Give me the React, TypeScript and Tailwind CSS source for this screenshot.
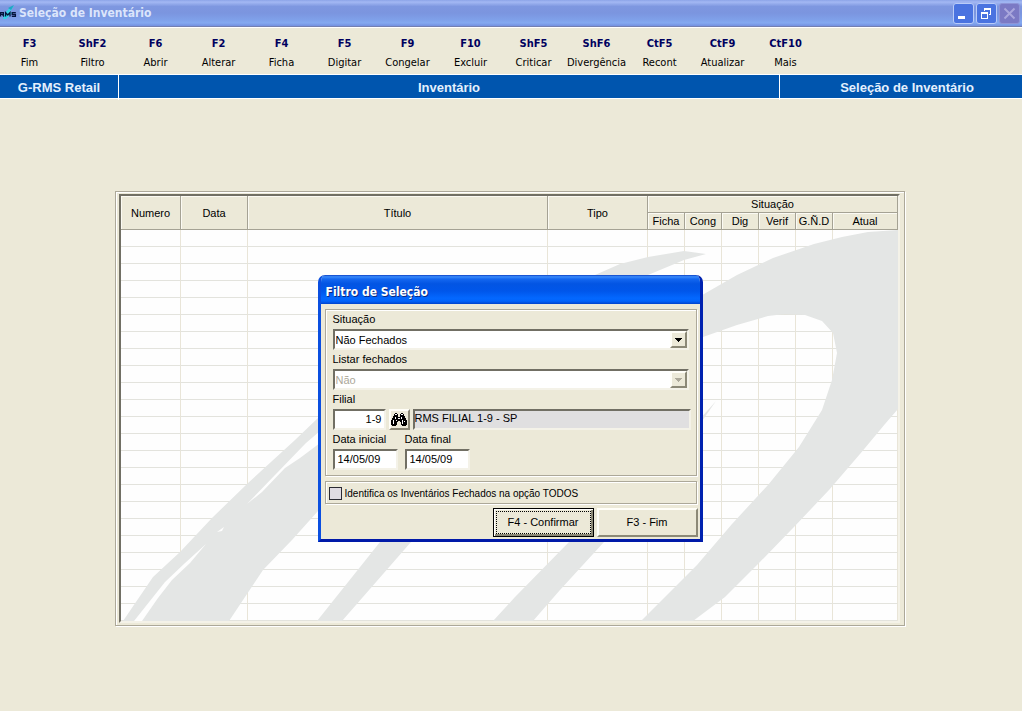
import React from "react";

const commands = [
  { key: "F3", label: "Fim" },
  { key: "ShF2", label: "Filtro" },
  { key: "F6", label: "Abrir" },
  { key: "F2", label: "Alterar" },
  { key: "F4", label: "Ficha" },
  { key: "F5", label: "Digitar" },
  { key: "F9", label: "Congelar" },
  { key: "F10", label: "Excluir" },
  { key: "ShF5", label: "Criticar" },
  { key: "ShF6", label: "Divergência" },
  { key: "CtF5", label: "Recont" },
  { key: "CtF9", label: "Atualizar" },
  { key: "CtF10", label: "Mais" },
];

const statusColumns = ["Ficha", "Cong", "Dig", "Verif", "G.Ñ.D", "Atual"];
const rows = Array.from({ length: 23 }, (_, i) => i);
const columns = Array.from({ length: 10 }, (_, i) => i);

const etched = "border border-[#aca899] shadow-[inset_1px_1px_0_#fff,1px_1px_0_#fff]";
const sunken =
  "border-2 border-t-[#716f64] border-l-[#716f64] border-r-[#f4f2e8] border-b-[#f4f2e8]";
const raised =
  "border-2 border-t-[#fffef8] border-l-[#fffef8] border-r-[#8c8977] border-b-[#8c8977] bg-[#ece9d8]";
const headCell =
  "border-r border-b border-[#a5a294] bg-[#ece9d8] p-0 text-center font-normal shadow-[inset_1px_1px_0_#fbfaf3]";

function Logo() {
  return (
    <svg viewBox="0 0 18 18" className="size-[18px] shrink-0" aria-hidden="true">
      <path d="M3 15 C4 9 8 4 14 2 L9 9 L13 8 L6 15 Z" fill="#35d3e6" />
      <path d="M8 4 L14 1 L11 6 Z" fill="#1fa7c4" />
      <g fill="none" stroke="#05143c" strokeWidth="1.3">
        <path d="M0.6 12.5 V8.6 H3.4 V10.4 H1 M2.4 10.4 L4 12.5" />
        <path d="M5.6 12.5 V8.6 L7.8 11 L10 8.6 V12.5" />
        <path d="M15.8 8.6 H12.2 V10.5 H15.4 V12.3 H11.8" />
      </g>
    </svg>
  );
}

function Binoculars() {
  return (
    <svg viewBox="0 0 16 13" className="h-[13px] w-4 shrink-0" shapeRendering="crispEdges" aria-hidden="true">
      <path d="M4 0h2v1h1v3h2v-3h1v-1h2v1h1v2h1v2h1v2h1v5h-1v1h-4v-1h-1v-3h-1v-1h-2v1h-1v3h-1v1h-4v-1h-1v-5h1v-2h1v-2h1v-2h1z" fill="#000" />
      <path
        d="M4 1h2v1h-2z M10 1h2v1h-2z M4 4h1v2h-1z M10 4h1v2h-1z M2 7h1v4h-1z M11 7h1v4h-1z M7 5h2v1h-2z M5 7h1v1h-1z M13 8h1v1h-1z"
        fill="#fff"
      />
    </svg>
  );
}

function Watermark() {
  return (
    <svg
      viewBox="121 230 777 391"
      preserveAspectRatio="none"
      className="pointer-events-none absolute inset-x-0 bottom-0 h-[391px] w-full"
      aria-hidden="true"
    >
      <g fill="#e4e6e5">
        <path d="M898 230 L868 232 L842 237 L814 244 L773 258 L737 275 L704 294 L600 350 L480 470 L380 542 L317 621 H342 L411 542 L600 400 L703 337 L737 325 L768 316 L785 314 L805 315 L822 321 L833 333 L837 353 L832 380 L822 410 L799 447 L768 485 L732 524 L697 565 L665 597 L641 621 H693 L725 597 L758 564 L794 527 L829 490 L860 454 L885 424 L898 409 Z" />
        <path d="M706 254 L684 251 L648 257 L620 264 L595 275 L500 320 L318 418 L295 440 L247 484 L212 518 L180 552 L153 577 L123 621 H229 L263 570 L292 540 L318 511 L500 350 L648 275 L684 260 Z" />
        <path d="M716 401 L690 430 L569 542 L515 597 L493 621 H533 L560 590 L604 542 L700 424 Z" />
      </g>
      <g fill="#fefefe">
        <path d="M320 431 L306 443 L275 475 L247 504 L262 492 L285 468 L300 458 L320 443 Z" />
        <path d="M206 544 L185 563 L165 582 L134 621 H142 L158 598 L172 580 L190 563 Z" />
        <path d="M224 527 L217 532 L222 531 Z" />
      </g>
    </svg>
  );
}

function InventoryTable() {
  return (
    <div className={`relative ${sunken} bg-[#fefefe]`}>
      <table className="w-full table-fixed border-separate border-spacing-0 text-[11px] leading-4">
        <colgroup>
          <col className="w-[60px]" />
          <col className="w-[67px]" />
          <col />
          <col className="w-[100px]" />
          <col className="w-[37px]" />
          <col className="w-[37px]" />
          <col className="w-[37px]" />
          <col className="w-[37px]" />
          <col className="w-[37px]" />
          <col className="w-[65px]" />
        </colgroup>
        <thead>
          <tr className="h-[17px]">
            <th rowSpan={2} className={headCell}>Numero</th>
            <th rowSpan={2} className={headCell}>Data</th>
            <th rowSpan={2} className={headCell}>Título</th>
            <th rowSpan={2} className={headCell}>Tipo</th>
            <th colSpan={6} className={headCell}>Situação</th>
          </tr>
          <tr className="h-[17px]">
            {statusColumns.map((name) => (
              <th key={name} className={headCell}>{name}</th>
            ))}
          </tr>
        </thead>
        <tbody>
          {rows.map((row) => (
            <tr key={row} className="h-[17px]">
              {columns.map((column) => (
                <td key={column} className="border-r border-b border-r-[#e9e5d8] border-b-[#e3e3dd] p-0" />
              ))}
            </tr>
          ))}
        </tbody>
      </table>
      <Watermark />
    </div>
  );
}

function SelectField({ id, label, value, disabled = false }: { id: string; label: string; value: string; disabled?: boolean }) {
  return (
    <div className="pr-[7px]">
      <label htmlFor={id} className="block h-[19px] leading-[19px]">{label}</label>
      <div className={`flex h-[21px] bg-white ${sunken}`}>
        <div className="relative flex grow">
          <select
            id={id}
            defaultValue={value}
            disabled={disabled}
            className="w-full appearance-none bg-white pl-px leading-4 text-black opacity-100 outline-none disabled:text-[#aca899]"
          >
            <option>{value}</option>
          </select>
          <span className={`pointer-events-none absolute inset-y-0 right-0 flex w-[17px] items-center justify-center ${raised}`}>
            <svg viewBox="0 0 7 4" className="h-1 w-[7px]" shapeRendering="crispEdges" aria-hidden="true">
              <path d="M0 0h7v1h-1v1h-1v1h-1v1h-1v-1h-1v-1h-1v-1h-1z" fill={disabled ? "#aca899" : "#000"} />
            </svg>
          </span>
        </div>
      </div>
    </div>
  );
}

function DateField({ id, label }: { id: string; label: string }) {
  return (
    <div className="w-[72px]">
      <label htmlFor={id} className="block h-[19px] leading-[19px]">{label}</label>
      <input
        id={id}
        type="text"
        defaultValue="14/05/09"
        className={`block h-[21px] w-[65px] bg-white pb-px pl-[3px] outline-none ${sunken}`}
      />
    </div>
  );
}

function FilterDialog() {
  return (
    <section
      role="dialog"
      aria-labelledby="dialog-title"
      className="w-[385px] overflow-hidden rounded-t-[7px] border-x-[3px] border-b-[3px] border-l-[#0b4fe0] border-r-[#0022b0] border-b-[#0019a8] bg-[#ece9d8] text-[11px]"
    >
      <header className="-mx-[3px] flex h-[29px] items-center bg-[linear-gradient(180deg,#0a3fc4_0%,#3a8bfb_6%,#1467f0_14%,#0355e3_30%,#0056ea_55%,#0368ff_80%,#0264fb_90%,#0143cc_100%)] pt-[5px] pl-2">
        <h2
          id="dialog-title"
          className="font-['DejaVu_Sans_Condensed','DejaVu_Sans',sans-serif] text-[12px] font-bold text-white [text-shadow:1px_1px_0_#0a2a80]"
        >
          Filtro de Seleção
        </h2>
      </header>
      <form className="flex flex-col pt-[5px] pr-[3px] pb-[2px] pl-1" onSubmit={(event) => event.preventDefault()}>
        <div className={`h-[167px] pl-[7px] ${etched}`}>
          <SelectField id="status" label="Situação" value="Não Fechados" />
          <SelectField id="closed" label="Listar fechados" value="Não" disabled />
          <div className="pr-[5px]">
            <label htmlFor="branch" className="block h-[19px] leading-[19px]">Filial</label>
            <div className="flex h-[21px]">
              <input
                id="branch"
                type="text"
                defaultValue="1-9"
                className={`w-[53px] bg-white pr-[2px] pb-px text-right outline-none ${sunken}`}
              />
              <button
                type="button"
                aria-label="Pesquisar filial"
                className={`mr-[3px] ml-[3px] flex w-[21px] items-center justify-center ${raised}`}
              >
                <Binoculars />
              </button>
              <input
                type="text"
                readOnly
                aria-label="Nome da filial"
                defaultValue="RMS FILIAL 1-9 - SP"
                className={`min-w-0 grow bg-[#e0dfe0] pb-[3px] outline-none ${sunken}`}
              />
            </div>
          </div>
          <div className="flex">
            <DateField id="start-date" label="Data inicial" />
            <DateField id="end-date" label="Data final" />
          </div>
        </div>
        <div className={`mt-[5px] flex h-[23px] items-center pt-px pl-[3px] ${etched}`}>
          <input
            id="identify"
            type="checkbox"
            className="size-[13px] shrink-0 appearance-none border border-[#2b2a33] bg-[#e0dce3] checked:bg-[#2b2a33]"
          />
          <label htmlFor="identify" className="pl-[3px] text-[10px] whitespace-nowrap">
            Identifica os Inventários Fechados na opção TODOS
          </label>
        </div>
        <div className="-mr-px flex justify-end gap-[3px] pt-1">
          <button type="submit" className="h-[29px] w-[101px] border border-black bg-[#ece9d8] p-px shadow-[inset_1px_1px_0_#fff,inset_-2px_-2px_0_#8c8977]">
            <span className="m-px flex h-[23px] items-center justify-center border border-dotted border-black">F4 - Confirmar</span>
          </button>
          <button type="button" className={`h-[29px] w-[101px] ${raised}`}>F3 - Fim</button>
        </div>
      </form>
    </section>
  );
}

const captionButton =
  "flex size-[21px] items-center justify-center rounded-[3px] border";

export default function App() {
  return (
    <div className="min-h-screen overflow-hidden bg-[#ece9d8] font-['Liberation_Sans',Arial,sans-serif] text-[11px] text-black">
      <header className="flex h-[27px] items-center border-b border-[#7480b0] bg-[linear-gradient(180deg,#8ca4e8_0%,#a3b8f3_8%,#7e97e0_25%,#7b95df_50%,#7fa0e9_75%,#84a9f0_88%,#7490e0_100%)] pr-[2px]">
        <Logo />
        <h1 className="grow pl-px font-['DejaVu_Sans_Condensed','DejaVu_Sans',sans-serif] text-[12px] font-bold text-[#dbe5fb]">
          Seleção de Inventário
        </h1>
        <div className="flex gap-[2px]">
          <button type="button" aria-label="Minimizar" className={`${captionButton} border-[#b9cbf8] bg-[#4a73e0]`}>
            <svg viewBox="0 0 19 19" className="size-[19px]" aria-hidden="true">
              <rect x="4" y="12" width="7" height="3" fill="#fff" />
            </svg>
          </button>
          <button type="button" aria-label="Restaurar" className={`${captionButton} border-[#b9cbf8] bg-[#4a73e0]`}>
            <svg viewBox="0 0 19 19" className="size-[19px]" fill="none" stroke="#fff" shapeRendering="crispEdges" aria-hidden="true">
              <path d="M7.500 7 V4.500 H13.500 V10.500 H11.500 M7 5.500 H14" />
              <path d="M4.500 8.500 H10.500 V14.500 H4.500 Z M4 9.500 H11" />
            </svg>
          </button>
          <button type="button" aria-label="Fechar" disabled className={`${captionButton} border-[#8f94d6] bg-[#7b79c4]`}>
            <svg viewBox="0 0 19 19" className="size-[19px]" stroke="#aaa7dd" strokeWidth="2" aria-hidden="true">
              <path d="M4.500 4.500 L14.500 14.500 M14.500 4.500 L4.500 14.500" />
            </svg>
          </button>
        </div>
      </header>

      <nav aria-label="Comandos" className="-ml-[2px] flex h-[48px] border-y border-white pt-[6px] font-['DejaVu_Sans_Condensed','DejaVu_Sans',sans-serif]">
        {commands.map(({ key, label }) => (
          <button key={key} type="button" className="flex w-[63px] shrink-0 flex-col items-center">
            <span className="h-5 leading-5 font-bold text-[#00005e]">{key}</span>
            <span className="h-[18px] leading-[18px]">{label}</span>
          </button>
        ))}
      </nav>

      <div className="grid h-6 grid-cols-[119px_1fr_242px] border-b border-white bg-[#0055ae] text-center text-[13px] leading-[25px] font-bold text-[#e4f0fd]">
        <span className="border-r border-white">G-RMS Retail</span>
        <span className="border-r border-white">Inventário</span>
        <span className="pl-3">Seleção de Inventário</span>
      </div>

      <main className="pt-[92px] pr-[117px] pb-[85px] pl-[115px]">
        <div className={`relative py-[2px] pr-1 pl-[3px] ${etched}`}>
          <InventoryTable />
          <div className="absolute inset-0 flex items-center justify-center">
            <FilterDialog />
          </div>
        </div>
      </main>
    </div>
  );
}
